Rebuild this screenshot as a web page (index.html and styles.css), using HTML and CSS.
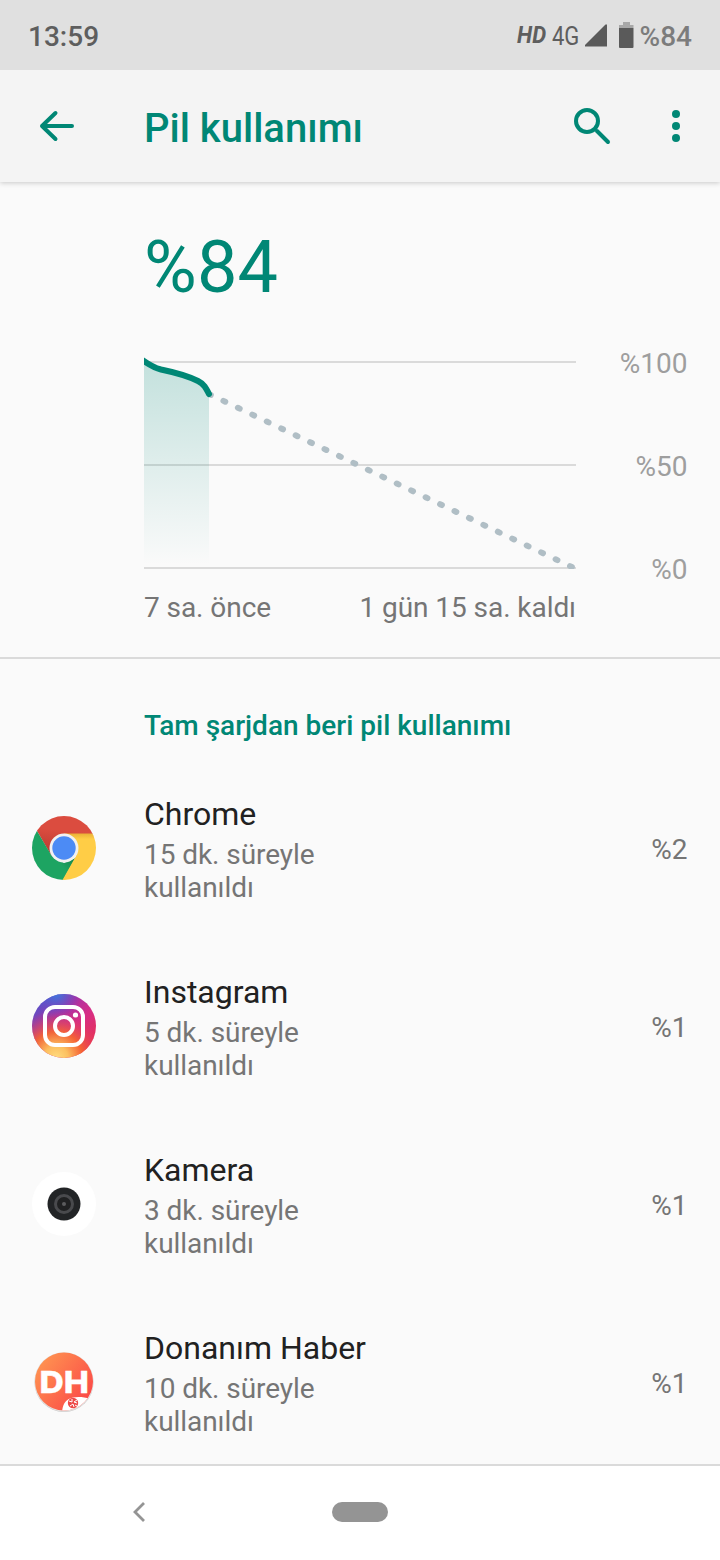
FILE: index.html
```html
<!DOCTYPE html>
<html lang="tr">
<head>
<meta charset="utf-8">
<title>Pil kullanımı</title>
<link rel="stylesheet" href="styles.css">
</head>
<body>
<div class="screen">
  <header class="status">
    <span class="clock">13:59</span>
    <span class="hd">HD</span>
    <span class="net">4G</span>
    <svg class="signal" width="23" height="23" viewBox="0 0 23 23"><path d="M22 0.500V22.500H0V21L20.500 0.500Z" fill="#5a5a5a"/></svg>
    <svg class="battery" width="15" height="26" viewBox="0 0 15 26"><path d="M4 0h7v3h3.500v3H0V3h4Z" fill="#a8a8a8"/><path d="M0 6h14.500v19q0 1-1 1H1q-1 0-1-1Z" fill="#5a5a5a"/></svg>
    <span class="level">%84</span>
  </header>
  <nav class="appbar">
    <svg class="back" width="36" height="32" viewBox="0 0 36 32"><path d="M17.500 3L4 16L17.500 29M4 16H34" fill="none" stroke="#008775" stroke-width="4" stroke-linecap="round" stroke-linejoin="round"/></svg>
    <h1 class="title">Pil kullanımı</h1>
    <svg class="search" width="38" height="38" viewBox="0 0 38 38"><circle cx="14" cy="14" r="11" fill="none" stroke="#008775" stroke-width="4"/><path d="M24 24L35 35" stroke="#008775" stroke-width="4" stroke-linecap="round"/></svg>
    <svg class="more" width="8" height="32" viewBox="0 0 8 32"><g fill="#008775"><circle cx="4" cy="4" r="4"/><circle cx="4" cy="16" r="4"/><circle cx="4" cy="28" r="4"/></g></svg>
  </nav>
  <section class="summary">
    <div class="total">%84</div>
    <div class="graph">
      <svg class="plot" width="432" height="212" viewBox="0 0 432 212">
        <defs><linearGradient id="fade" gradientUnits="userSpaceOnUse" x1="0" y1="4" x2="0" y2="208"><stop offset="0" stop-color="#008775" stop-opacity=".22"/><stop offset="1" stop-color="#008775" stop-opacity="0"/></linearGradient></defs>
        <path d="M0 5H432M0 108H432M0 211H432" stroke="#dadada" stroke-width="2"/>
        <path d="M65 37L432 212" fill="none" stroke="#b0bec5" stroke-width="6" stroke-linecap="round" stroke-dasharray="2 14"/>
        <path d="M0 4C5 8 10 11 17 12.500C29 15 46 20 54 24C60 27 62 31 65 37V210H0Z" fill="url(#fade)"/>
        <path d="M-3 2C4 7 9 10.500 17 12.500C29 15 46 20 54 24C60 27 62 31 65 37" fill="none" stroke="#008775" stroke-width="6" stroke-linecap="round" stroke-linejoin="round"/>
      </svg>
      <div class="scale"><span>%100</span><span>%50</span><span>%0</span></div>
    </div>
    <div class="range"><span>7 sa. önce</span><span>1 gün 15 sa. kaldı</span></div>
  </section>
  <main class="usage">
    <h2 class="heading">Tam şarjdan beri pil kullanımı</h2>
    <article class="app">
      <svg class="icon" width="64" height="64" viewBox="0 0 64 64">
        <defs><clipPath id="disc"><circle cx="32" cy="32" r="32"/></clipPath>
        <linearGradient id="cy" x1="0" y1="0" x2="0" y2="1"><stop offset="0" stop-color="#e9b036"/><stop offset=".12" stop-color="#ffcd46"/></linearGradient>
        <linearGradient id="cg" x1="0" y1="1" x2="1" y2="0"><stop offset=".5" stop-color="#1da462"/><stop offset=".75" stop-color="#148148"/></linearGradient>
        <linearGradient id="cr" x1=".5" y1="0" x2=".35" y2="1"><stop offset=".35" stop-color="#db4c3f"/><stop offset="1" stop-color="#b5392f"/></linearGradient></defs>
        <g clip-path="url(#disc)">
          <path d="M0 0H64V18H32L19.500 40L5 15Z" fill="url(#cr)"/>
          <path d="M5 15L19.500 39.500L32 47L43.500 42L30 66H0V15Z" fill="url(#cg)"/>
          <path d="M32 17.500H64V64H30.500L44 40Z" fill="url(#cy)"/>
        </g>
        <circle cx="32" cy="32" r="14.500" fill="#f1f1f1"/><circle cx="32" cy="32" r="11.700" fill="#4c8bf5"/>
      </svg>
      <div class="info"><div class="name">Chrome</div><div class="detail">15 dk. süreyle kullanıldı</div></div>
      <div class="percent">%2</div>
    </article>
    <article class="app">
      <svg class="icon" width="64" height="64" viewBox="0 0 64 64">
        <defs><linearGradient id="ib" x1=".15" y1=".1" x2=".85" y2=".8"><stop offset="0" stop-color="#5a50c8"/><stop offset=".35" stop-color="#a832a5"/><stop offset=".65" stop-color="#d62d88"/><stop offset="1" stop-color="#e4305c"/></linearGradient>
        <radialGradient id="iy" cx=".38" cy="1" r=".75"><stop offset="0" stop-color="#ffdc80"/><stop offset=".25" stop-color="#fcc060"/><stop offset=".55" stop-color="#f7682f" stop-opacity=".9"/><stop offset="1" stop-color="#e0306c" stop-opacity="0"/></radialGradient>
        <radialGradient id="ic" cx=".38" cy="0" r=".38"><stop offset="0" stop-color="#3e78de"/><stop offset="1" stop-color="#6648c8" stop-opacity="0"/></radialGradient></defs>
        <circle cx="32" cy="32" r="32" fill="url(#ib)"/><circle cx="32" cy="32" r="32" fill="url(#iy)"/><circle cx="32" cy="32" r="32" fill="url(#ic)"/>
        <g fill="none" stroke="#fff" stroke-width="4"><rect x="13" y="13" width="38" height="38" rx="10"/><circle cx="32" cy="32" r="9"/></g><circle cx="43.500" cy="21" r="2.600" fill="#fff"/>
      </svg>
      <div class="info"><div class="name">Instagram</div><div class="detail">5 dk. süreyle kullanıldı</div></div>
      <div class="percent">%1</div>
    </article>
    <article class="app">
      <svg class="icon" width="64" height="64" viewBox="0 0 64 64"><circle cx="32" cy="32" r="32" fill="#fff"/><circle cx="32" cy="32" r="16.500" fill="#222426"/><circle cx="32" cy="32" r="8.500" fill="#202122" stroke="#494a4d" stroke-width="3"/><circle cx="32" cy="32" r="2" fill="#5b5c5e"/></svg>
      <div class="info"><div class="name">Kamera</div><div class="detail">3 dk. süreyle kullanıldı</div></div>
      <div class="percent">%1</div>
    </article>
    <article class="app">
      <svg class="icon" width="64" height="64" viewBox="0 0 64 64">
        <defs><linearGradient id="dh" x1="0" y1=".1" x2=".9" y2=".8"><stop offset="0" stop-color="#ff9d52"/><stop offset="1" stop-color="#fb4747"/></linearGradient><clipPath id="dc"><circle cx="32" cy="31.500" r="29"/></clipPath></defs>
        <circle cx="32" cy="32.500" r="29.500" fill="#c9c9c9"/><circle cx="32" cy="31.800" r="29.600" fill="#e6e2e0"/>
        <g clip-path="url(#dc)"><rect width="64" height="64" fill="url(#dh)"/><path d="M30 64C30 54 34 49 41 47.500C46 46.500 52 47 58 48.500V64Z" fill="#fff"/></g>
        <text class="dh" x="7.500" y="43" textLength="49.500" lengthAdjust="spacingAndGlyphs">DH</text>
        <circle cx="41" cy="53" r="5.200" fill="#ee4a48"/><path d="M37 51l3 1v-3M45 50l-3 2 3 1M38 56l3-2 1 3M43 55l2 1" stroke="#fff" stroke-width="1" fill="none"/>
      </svg>
      <div class="info"><div class="name">Donanım Haber</div><div class="detail">10 dk. süreyle kullanıldı</div></div>
      <div class="percent">%1</div>
    </article>
  </main>
  <footer class="navbar">
    <svg class="navback" width="12" height="20" viewBox="0 0 12 20"><path d="M11 1L2 10L11 19" fill="none" stroke="#949494" stroke-width="2.800"/></svg>
    <div class="pill"></div>
  </footer>
</div>
</body>
</html>
```
FILE: styles.css
```css
* { box-sizing: border-box; }
body { margin: 0; font-family: Roboto, sans-serif; background: #fafafa; }
svg { display: block; flex: none; }
.screen { width: 720px; height: 1560px; display: flex; flex-direction: column; overflow: hidden; }
.status { height: 70px; background: #e0e0e0; display: flex; align-items: center; padding: 2px 28px 0; color: #5e5e5e; flex: none; }
.clock { font-size: 28px; font-weight: 500; margin-right: auto; }
.hd { font-size: 24px; font-weight: 700; font-style: italic; width: 36px; white-space: nowrap; transform: translate(1px, -1px) scaleX(.92); transform-origin: left; }
.net { font-size: 25px; width: 33px; transform: scaleX(.88); transform-origin: left; }
.battery { margin: -2px 6px 0 11px; }
.signal { margin-top: -1px; }
.level { font-size: 28px; font-weight: 500; color: #7c7c7c; white-space: nowrap; }
.appbar { height: 112px; flex: none; background: #f4f4f4; display: flex; align-items: center; padding: 0 40px 0 38px; box-shadow: 0 1px 5px rgba(0,0,0,.2); clip-path: inset(0 0 -10px); z-index: 1; }
.title { margin: 6px auto 0 70px; font-size: 40px; font-weight: 500; line-height: 48px; color: #008775; }
.search { margin-right: 61px; }
.summary { height: 477px; flex: none; border-bottom: 2px solid #dadada; padding: 38px 32px 0 144px; }
.total { font-size: 72px; line-height: 96px; color: #008775; height: 96px; letter-spacing: .2px; }
.graph { display: flex; justify-content: space-between; height: 212px; margin-top: 41px; }
.scale { display: flex; flex-direction: column; text-align: right; font-size: 28px; line-height: 33px; gap: 70px; margin: -10px .5px 0 0; color: #9e9e9e; }
.range { width: 432px; display: flex; justify-content: space-between; font-size: 28px; line-height: 33px; color: #757575; margin-top: 22px; letter-spacing: -.06px; }
.usage { height: 805px; flex: none; overflow: hidden; }
.heading { margin: 0; height: 100px; padding: 50px 0 0 144px; font-size: 28px; line-height: 33px; font-weight: 500; color: #008775; }
.app { height: 178px; display: flex; align-items: center; padding: 0 32px; }
.info { width: 240px; margin-left: 48px; margin-top: 2px; }
.name { font-size: 32px; line-height: 38px; color: #212121; white-space: nowrap; margin-bottom: 5px; }
.detail { font-size: 28px; line-height: 33px; color: #757575; letter-spacing: -.06px; }
.percent { margin: 3px .5px 0 auto; font-size: 28px; line-height: 33px; color: #757575; }
.dh { font: 800 30.500px Inter, sans-serif; fill: #fff; stroke: #fff; stroke-width: .3px; }
.navbar { height: 96px; flex: none; background: #fff; border-top: 2px solid #dadada; display: flex; align-items: center; padding: 0 0 2px 132.500px; }
.pill { width: 56px; height: 20px; border-radius: 10px; background: #949494; margin-left: 187.500px; }
```
